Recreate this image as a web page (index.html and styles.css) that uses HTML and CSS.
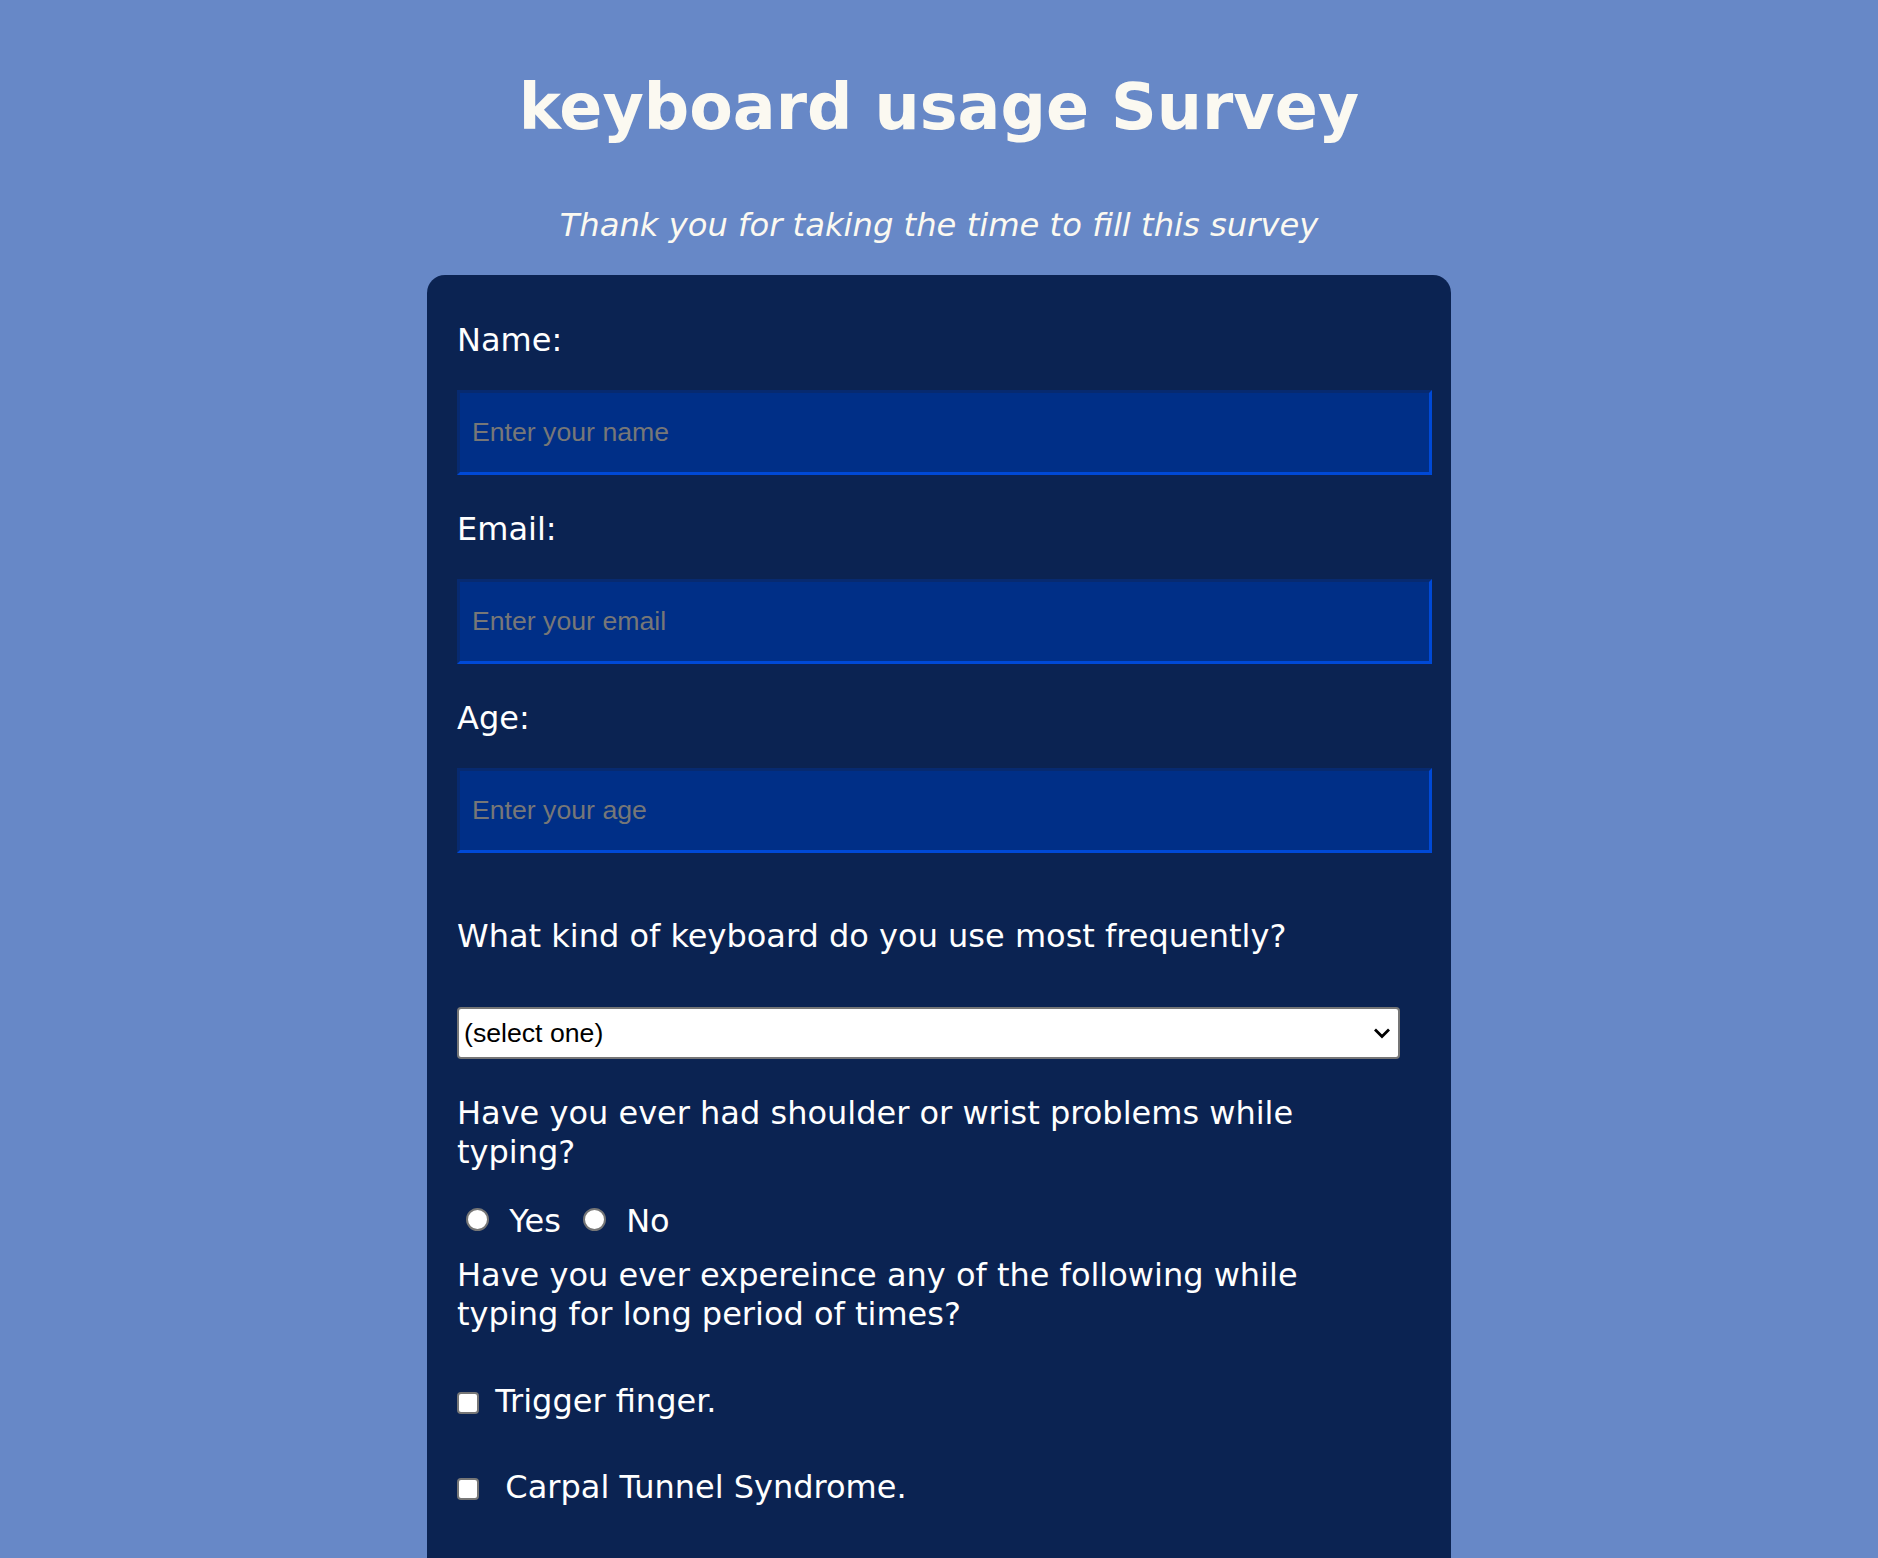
FILE: index.html
```html
<!DOCTYPE html>
<html lang="en">
<head>
<meta charset="utf-8">
<title>keyboard usage Survey</title>
<link rel="stylesheet" href="styles.css">
</head>
<body>
<header class="page-head">
  <h1 class="title">keyboard usage Survey</h1>
  <p class="description">Thank you for taking the time to fill this survey</p>
</header>
<form class="survey">
  <div class="field">
    <label class="field-label" for="name">Name:</label>
    <input class="text-input" id="name" type="text" placeholder="Enter your name">
  </div>
  <div class="field">
    <label class="field-label" for="email">Email:</label>
    <input class="text-input" id="email" type="email" placeholder="Enter your email">
  </div>
  <div class="field">
    <label class="field-label" for="age">Age:</label>
    <input class="text-input" id="age" type="text" inputmode="numeric" placeholder="Enter your age">
  </div>
  <p class="question q-keyboard">What kind of keyboard do you use most frequently?</p>
  <div class="select-wrap">
    <select class="select" id="keyboard">
      <option>(select one)</option>
      <option>Laptop keyboard</option>
      <option>Mechanical keyboard</option>
      <option>Membrane keyboard</option>
      <option>Ergonomic keyboard</option>
    </select>
    <svg class="chevron" width="18" height="12" viewBox="0 0 18 12" aria-hidden="true"><polyline points="2,2.5 9,9.5 16,2.5" fill="none" stroke="#000" stroke-width="2.8"/></svg>
  </div>
  <p class="question q-pain">Have you ever had shoulder or wrist problems while typing?</p>
  <div class="radio-row">
    <label class="radio-label"><input class="radio" type="radio" name="pain" value="yes"> Yes</label>
    <label class="radio-label"><input class="radio" type="radio" name="pain" value="no"> No</label>
  </div>
  <p class="question q-symptoms">Have you ever expereince any of the following while typing for long period of times?</p>
  <div class="check-row"><input class="check" type="checkbox" id="trigger"> <label for="trigger">Trigger finger.</label></div>
  <div class="check-row"><input class="check" type="checkbox" id="carpal"> <label for="carpal">&nbsp;Carpal Tunnel Syndrome.</label></div>
</form>
</body>
</html>
```

FILE: styles.css
```css
* {
  box-sizing: border-box;
}

html {
  background: #6788c7;
}

body {
  margin: 0;
  padding: 70px 0 40px;
  background: #6788c7;
  font-family: "DejaVu Sans", Verdana, sans-serif;
  color: #ffffff;
}

.page-head {
  text-align: center;
  color: #fbf9f1;
}

.title {
  margin: 0;
  font-size: 63.5px;
  line-height: 75px;
  font-weight: bold;
}

.description {
  margin: 62px 0 31px;
  font-size: 32.2px;
  line-height: 37px;
  font-style: italic;
}

.survey {
  width: 1024px;
  margin: 0 auto;
  padding: 46px 30px 70px;
  background: #0b2352;
  border-radius: 18px;
  font-size: 32px;
}

.field {
  margin-bottom: 35px;
}

.field-label {
  display: block;
  line-height: 38px;
  margin-bottom: 31px;
}

.text-input {
  display: block;
  width: 975px;
  height: 85px;
  margin: 0;
  padding: 0 12px;
  border: 3px solid;
  border-color: #072a70 #0049d6 #0049d6 #072a70;
  border-radius: 0;
  background: #002f87;
  color: #ffffff;
  font-family: "Liberation Sans", Arial, sans-serif;
  font-size: 26.67px;
  outline: none;
}

.text-input::placeholder {
  color: #777777;
  opacity: 1;
}

.question {
  margin: 0;
  max-width: 900px;
  line-height: 39px;
}

.q-keyboard {
  margin: 64px 0 51px;
}

.select-wrap {
  position: relative;
  width: 943px;
  margin-bottom: 35px;
}

.select {
  display: block;
  width: 943px;
  height: 52px;
  margin: 0;
  padding: 0 40px 0 5px;
  appearance: none;
  -webkit-appearance: none;
  border: 2px solid #767676;
  border-radius: 4px;
  background: #ffffff;
  color: #000000;
  font-family: "Liberation Sans", Arial, sans-serif;
  font-size: 26.67px;
}

.chevron {
  position: absolute;
  top: 20px;
  right: 9px;
  pointer-events: none;
}

.q-pain {
  margin-bottom: 30px;
}

.radio-row {
  line-height: 39px;
}

.radio-label + .radio-label {
  margin-left: 3px;
}

.radio {
  appearance: none;
  -webkit-appearance: none;
  width: 23px;
  height: 23px;
  margin: 0 10px 0 9px;
  border: 2px solid #767676;
  border-radius: 50%;
  background: #ffffff;
  vertical-align: 1px;
}

.q-symptoms {
  margin: 15px 0 48px;
}

.check-row {
  line-height: 39px;
  margin-bottom: 47px;
}

.check {
  appearance: none;
  -webkit-appearance: none;
  width: 22px;
  height: 22px;
  margin: 0 6px 0 0;
  border: 2px solid #767676;
  border-radius: 4px;
  background: #ffffff;
  vertical-align: middle;
}
```
